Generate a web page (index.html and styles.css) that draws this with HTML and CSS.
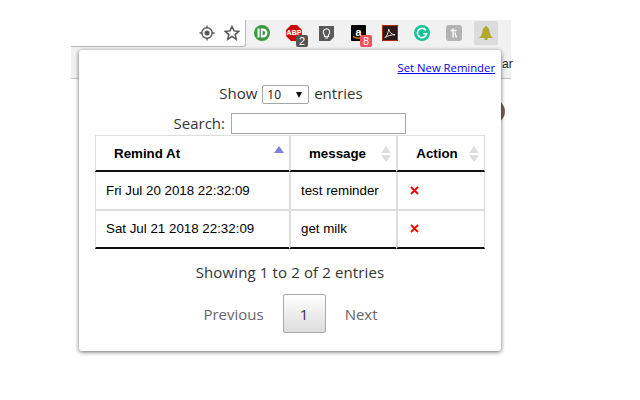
FILE: index.html
```html
<!DOCTYPE html>
<html>
<head>
<meta charset="utf-8">
<title>Reminders</title>
<link rel="stylesheet" href="styles.css">
</head>
<body>
<div class="stage">
  <div class="chrome">
    <div class="omnibox">
      <svg class="tool" width="16" height="16" viewBox="0 0 16 16"><circle cx="8" cy="8" r="5.2" fill="none" stroke="#555" stroke-width="1.4"/><circle cx="8" cy="8" r="2.5" fill="#555"/><path d="M8 .5v2.500M8 13v2.500M.5 8H3M13 8h2.500" stroke="#555" stroke-width="1.300"/></svg>
      <svg class="tool" width="16" height="16" viewBox="0 0 16 16"><path d="M8 1.500l2 4.400 4.700.5-3.500 3.200 1 4.700L8 11.500l-4.200 2.800 1-4.700-3.500-3.200 4.700-.5z" fill="none" stroke="#555" stroke-width="1.500"/></svg>
    </div>
    <div class="exts">
      <span class="ext"><svg width="16" height="16" viewBox="0 0 16 16"><circle cx="8" cy="8" r="8" fill="#3d9640"/><path d="M3.500 3.500h2v9h-2z" fill="#fff"/><path d="M6.800 3.500h2.200a4.500 4.500 0 0 1 0 9H6.800z" fill="#fff"/><path d="M8.600 5.800h.4a2.200 2.200 0 0 1 0 4.400h-.4z" fill="#3d9640"/></svg></span>
      <span class="ext"><svg width="16" height="16" viewBox="0 0 16 16"><path d="M5 0h6l5 5v6l-5 5H5l-5-5V5z" fill="#c00"/><path d="M0 5.500h16v5H0z" fill="#d22"/><text x="8" y="10.300" class="abp">ABP</text></svg><b class="badge grey">2</b></span>
      <span class="ext"><svg width="15" height="15" viewBox="0 0 15 15"><path d="M0 0h15v11l-4 4H0z" fill="#595959"/><path d="M7.500 2.800a3.300 3.300 0 0 0-2 5.900v1.800h4V8.700a3.300 3.300 0 0 0-2-5.900z" fill="none" stroke="#fff" stroke-width="1.100"/><path d="M6 12h3" stroke="#fff"/></svg></span>
      <span class="ext"><svg width="15" height="16" viewBox="0 0 15 16"><rect width="15" height="16" rx="1" fill="#000"/><text x="7.500" y="10.500" class="amz">a</text><path d="M2 11.500c3 2 7 2 10 .5" stroke="#f90" stroke-width="1.200" fill="none"/></svg><b class="badge red">8</b></span>
      <span class="ext"><svg width="16" height="16" viewBox="0 0 16 16"><rect x=".5" y=".5" width="15" height="15" fill="#2b1a1a" stroke="#b3260e"/><path d="M3 12.500c2-1.500 3.500-5 3.700-8.500.6 3 2.500 5.500 6.300 5.800-3.500-.2-7 1-10 2.700z" fill="none" stroke="#e8dada" stroke-width="1"/></svg></span>
      <span class="ext"><svg width="16" height="16" viewBox="0 0 16 16"><circle cx="8" cy="8" r="8" fill="#15c39a"/><path d="M11.800 5.300A4.600 4.600 0 1 0 12.600 8.800H9.300" fill="none" stroke="#fff" stroke-width="1.600"/></svg></span>
      <span class="ext"><svg width="16" height="16" viewBox="0 0 16 16"><rect width="16" height="16" rx="3" fill="#b3b3b3"/><path d="M4.500 5.500h6M7 3.500v9M9.500 7.500c-1 2 .5 3 1 5" fill="none" stroke="#fff" stroke-width="1.400"/></svg></span>
      <span class="ext"><span class="active"><svg width="14" height="14" viewBox="0 0 14 14"><path d="M7 0a1.300 1.300 0 0 1 1.300 1.200C10 2 10.500 4 10.700 6c.3 3 1.500 4.500 3.300 6H0c1.800-1.500 3-3 3.300-6C3.500 4 4 2 5.700 1.200A1.300 1.300 0 0 1 7 0z" fill="#b5a727"/><rect x="5.500" y="12" width="3" height="2" fill="#b5a727"/></svg></span></span>
    </div>
  </div>
  <span class="peek">ar</span>
  <span class="avatar"></span>
  <main class="popup">
    <div class="top-link"><a href="#">Set New Reminder</a></div>
    <div class="length">
      <label class="length-label">Show
        <span class="fake-select">10<i class="caret"></i></span>
        entries</label>
    </div>
    <div class="search"><label class="search-label">Search:</label><span class="fake-input"></span></div>
    <table class="grid">
      <thead>
        <tr>
          <th class="c1">Remind At<span class="sort"><i class="up on"></i></span></th>
          <th class="c2">message<span class="sort"><i class="up"></i><i class="down"></i></span></th>
          <th class="c3">Action<span class="sort"><i class="up"></i><i class="down"></i></span></th>
        </tr>
      </thead>
      <tbody>
        <tr class="r1"><td>Fri Jul 20 2018 22:32:09</td><td>test reminder</td><td><svg class="del" width="9" height="9" viewBox="0 0 9 9"><path d="M1 1l7 7M8 1L1 8" stroke="#f00" stroke-width="1.800"/></svg></td></tr>
        <tr class="r2"><td>Sat Jul 21 2018 22:32:09</td><td>get milk</td><td><svg class="del" width="9" height="9" viewBox="0 0 9 9"><path d="M1 1l7 7M8 1L1 8" stroke="#f00" stroke-width="1.800"/></svg></td></tr>
      </tbody>
    </table>
    <div class="info">Showing 1 to 2 of 2 entries</div>
    <div class="pager">
      <span class="pg">Previous</span>
      <span class="pg current">1</span>
      <span class="pg">Next</span>
    </div>
  </main>
</div>
</body>
</html>
```
FILE: styles.css
```css
* { box-sizing: border-box; }
html, body { margin: 0; padding: 0; background: #fff; }
.stage { position: relative; width: 640px; height: 400px; overflow: hidden; font-family: "Open Sans", sans-serif; }
.chrome { display: flex; align-items: flex-start; width: 440px; height: 59px; margin: 20px 0 0 71px; background: #f1f1f1; border-bottom: 1px solid #c4c4c4; }
.omnibox { width: 175px; height: 27px; background: #fff; border-right: 1px solid #b8b8b8; border-bottom: 1px solid #b8b8b8; border-bottom-right-radius: 3px; display: flex; justify-content: flex-end; align-items: center; gap: 9px; padding-right: 5px; }
.exts { display: flex; }
.ext { position: relative; width: 32px; height: 26px; display: flex; align-items: center; justify-content: center; flex: none; }
.abp { font: bold 7px "Liberation Sans", sans-serif; fill: #fff; text-anchor: middle; }
.amz { font: bold 11.500px "Liberation Sans", sans-serif; fill: #fff; text-anchor: middle; }
.badge { position: absolute; left: 18px; top: 15px; font: normal 11px/12px "Liberation Sans", sans-serif; color: #fff; width: 12px; height: 12px; text-align: center; border-radius: 2px; }
.grey { background: #555; }
.red { background: #f4505a; }
.active { display: flex; align-items: center; justify-content: center; width: 24px; height: 24px; background: #dcdcdc; border-radius: 2px; }
.peek { position: absolute; left: 502px; top: 57px; font: 12px/14px "Liberation Sans", sans-serif; color: #222; }
.avatar { position: absolute; left: 480px; top: 99px; width: 25px; height: 25px; border-radius: 50%; background: #7a6355; }
.popup { position: absolute; left: 79px; top: 50px; width: 422px; height: 301px; background: #fff; border-radius: 3px; box-shadow: 0 1px 4px rgba(0,0,0,.6); padding: 0 16px; color: #333; font-size: 15px; }
.top-link { text-align: right; font-size: 11.3px; line-height: 14px; height: 14px; margin: 11px -10px 0 0; }
.top-link a { color: #00e; }
.length { text-align: center; margin-top: 8px; line-height: 20px; height: 20px; padding-left: 2px; }
.fake-select { display: inline-block; vertical-align: middle; position: relative; width: 47px; height: 19px; margin: 0 1px; border: 1px solid #a6a6a6; border-radius: 2px; font-size: 12px; line-height: 17px; color: #111; padding-left: 4px; text-align: left; }
.caret { position: absolute; right: 6px; top: 6px; border: 3px solid transparent; border-top: 6px solid #111; border-bottom: 0; }
.search { display: flex; justify-content: flex-end; align-items: center; height: 21px; margin-top: 10px; padding-right: 79px; gap: 6px; }
.search-label { margin-top: -2px; }
.fake-input { display: block; width: 175px; height: 21px; border: 1px solid #a6a6a6; }
.grid { width: 390px; border-collapse: separate; border-spacing: 0; table-layout: fixed; font-family: "Liberation Sans", sans-serif; color: #000; font-size: 13.33px; margin-top: 1px; }
.c1 { width: 194px; }
.c2 { width: 107px; }
.c3 { width: 89px; }
.grid th { position: relative; height: 37px; font-size: 13.33px; border-top: 1px solid #ddd; border-bottom: 2px solid #111; padding: 0; text-align: center; }
.grid th.c1 { text-align: left; padding-left: 18px; border-left: 1px solid #ddd; }
.grid th.c2 { border-left: 2px solid #ddd; padding-right: 12px; }
.grid th.c3 { border-left: 2px solid #ddd; border-right: 1px solid #ddd; padding-right: 8px; }
.grid td { border-bottom: 2px solid #ddd; padding: 0 10px; }
.grid td:first-child { border-left: 1px solid #ddd; }
.grid td:last-child { border-right: 1px solid #ddd; }
.grid td + td { border-left: 2px solid #ddd; }
.r1 td { height: 39px; }
.r2 td { height: 38px; border-bottom-color: #111; padding-bottom: 2px; }
.sort { position: absolute; right: 5px; top: 10px; display: flex; flex-direction: column; gap: 2px; }
.up { display: block; border: 5px solid transparent; border-top: 0; border-bottom: 7px solid #ddd; }
.down { display: block; border: 5px solid transparent; border-bottom: 0; border-top: 7px solid #ddd; }
.up.on { border-bottom-color: #7f7fdc; }
.del { display: block; margin-left: 2px; }
.info { text-align: center; margin-top: 13px; height: 20px; line-height: 20px; letter-spacing: .13px; }
.pager { display: flex; justify-content: center; align-items: center; margin-top: 12px; color: #666; margin-left: 1px; }
.pg { padding: 0 19px; line-height: 41px; height: 39px; }
.current { width: 43px; padding: 0; text-align: center; border: 1px solid #a9a9a9; border-radius: 2px; color: #333; background: linear-gradient(#fff, #dcdcdc); line-height: 39px; }
```
